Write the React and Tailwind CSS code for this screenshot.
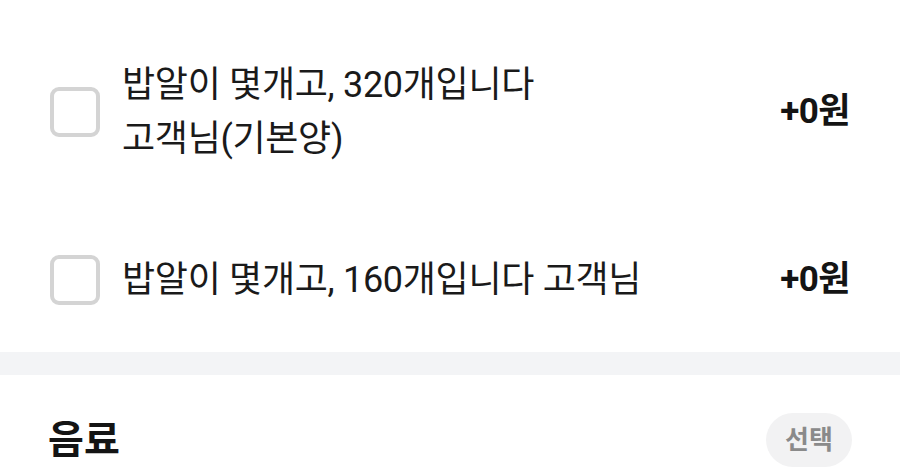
import React from 'react'

const font = { fontFamily: 'Roboto, "Noto Sans CJK KR", sans-serif' }

function OptionRow({ lines, price, className = '' }) {
  return (
    <div className={`flex items-center justify-between pl-[50px] pr-[50px] ${className}`}>
      <div className="flex items-center">
        <span className="w-[50px] h-[50px] rounded-[9px] border-[4px] border-[#d4d4d4] bg-white shrink-0" />
        <p className="ml-[22px] text-[36px] leading-[54px] text-[#1a1a1a] tracking-[-0.3px]">
          {lines.map((l, i) => (
            <span key={i} className="block">{l}</span>
          ))}
        </p>
      </div>
      <span className="text-[35px] font-bold text-[#141414] tracking-[-0.5px]">{price}</span>
    </div>
  )
}

export default function App() {
  return (
    <div className="w-[900px] h-[470px] bg-white overflow-hidden" style={font}>
      <OptionRow className="pt-[58px]" lines={['밥알이 몇개고, 320개입니다', '고객님(기본양)']} price="+0원" />
      <OptionRow className="pt-[87px]" lines={['밥알이 몇개고, 160개입니다 고객님']} price="+0원" />
      <div className="mt-[45px] h-[23px] bg-[#f3f4f6]" />
      <div className="flex items-center justify-between pl-[48px] pr-[48px] pt-[38px]">
        <h2 className="text-[39px] leading-[54px] font-bold text-[#141414]">음료</h2>
        <span className="h-[54px] w-[86px] rounded-full bg-[#f2f2f3] flex items-center justify-center text-[26px] font-bold text-[#8a8a8a]">선택</span>
      </div>
    </div>
  )
}
